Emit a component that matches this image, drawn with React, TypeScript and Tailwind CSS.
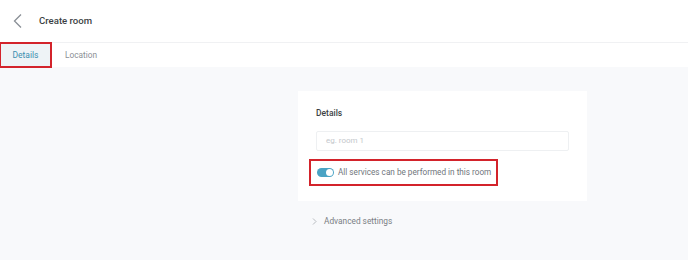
import React from 'react';

const App = () => {
  return (
    <div className="w-[688px] h-[260px] bg-[#f8f9fb] font-['Roboto',sans-serif] overflow-hidden">
      {/* header */}
      <div className="h-[43px] bg-white flex items-center border-b border-[#f0f1f3]">
        <svg width="14" height="16" viewBox="0 0 14 16" className="ml-[11px]">
          <path d="M10 1.5 L3.5 8 L10 14.5" fill="none" stroke="#8a8f96" strokeWidth="1.3" />
        </svg>
        <span className="ml-[14px] text-[9.6px] font-medium text-[#3c3f44] whitespace-nowrap">Create room</span>
      </div>

      {/* tabs */}
      <div className="h-[24px] bg-white flex items-stretch">
        <div className="w-[51px] flex items-center justify-center bg-[#eef3f6] outline-2 outline-[#d3232b] -outline-offset-1 text-[8.5px] text-[#3b8fb0]">
          Details
        </div>
        <div className="ml-[14px] flex items-center text-[8.3px] text-[#8c9096]">Location</div>
      </div>

      {/* body */}
      <div className="pl-[298px] pt-[24px]">
        <div className="w-[289px] h-[110px] bg-white px-[18px] pt-[16px]">
          <div className="text-[8.5px] font-medium text-[#3c3f44]">Details</div>
          <div className="mt-[11px] w-[253px] h-[20px] border border-[#eef0f2] rounded-[2px] flex items-center px-[9px] text-[8px] text-[#c4c7cb]">
            eg. room 1
          </div>
          <div className="mt-[8px] -ml-[7px] w-[189px] h-[27px] border-2 border-[#d3232b] flex items-center pl-[6px]">
            <div className="w-[17px] h-[9px] rounded-full bg-[#4aa3c4] flex items-center justify-end pr-[1px] shrink-0">
              <div className="w-[7px] h-[7px] rounded-full bg-white" />
            </div>
            <span className="ml-[4px] text-[8.2px] text-[#70757c] whitespace-nowrap">All services can be performed in this room</span>
          </div>
        </div>
        <div className="flex items-center mt-[14px] pl-[14px]">
          <svg width="5" height="7" viewBox="0 0 5 7">
            <path d="M1 0.5 L4 3.5 L1 6.5" fill="none" stroke="#b0b3b8" strokeWidth="0.9" />
          </svg>
          <span className="ml-[7px] text-[8.3px] text-[#7a7e84]">Advanced settings</span>
        </div>
      </div>
    </div>
  );
};

export default App;
